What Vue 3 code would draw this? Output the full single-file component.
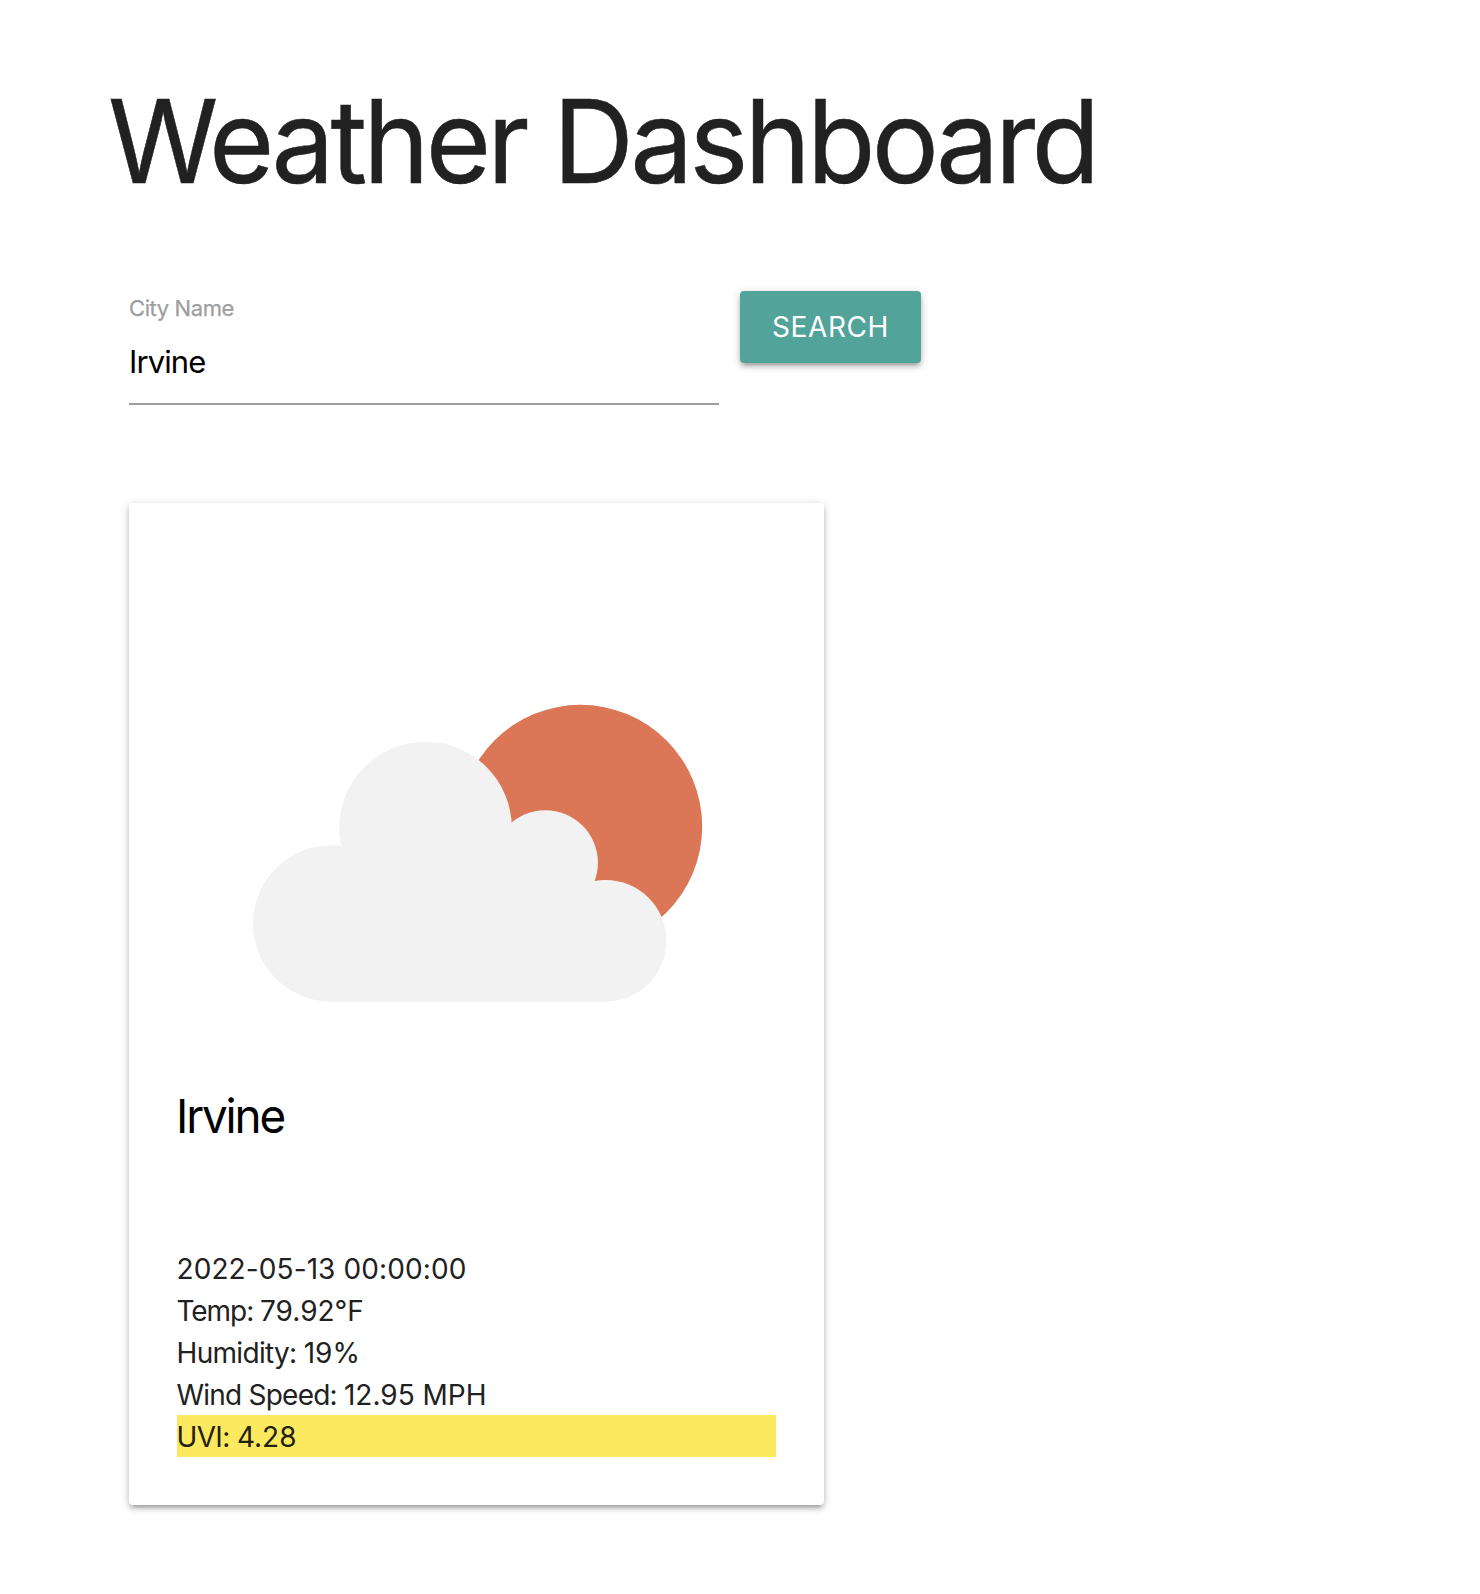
<script setup>
const details = [
  { name: 'temp', label: 'Temp:', value: '79.92°F' },
  { name: 'humidity', label: 'Humidity:', value: '19%' },
  { name: 'wind', label: 'Wind Speed:', value: '12.95 MPH' },
  { name: 'uvi', label: 'UVI:', value: '4.28' }
]
</script>

<template>
  <main class="page">
    <h1><span>Weather Dashboard</span></h1>
    <form class="search" @submit.prevent>
      <div class="field">
        <label for="city"><span>City Name</span></label>
        <input id="city" type="text" value="Irvine" />
      </div>
      <button type="submit"><span>SEARCH</span></button>
    </form>
    <article class="card">
      <svg class="weather" viewBox="0 0 695 560" aria-label="Partly cloudy">
        <circle cx="451.500" cy="323.500" r="121.700" fill="#db7656" />
        <g fill="#f2f2f2">
          <circle cx="202.200" cy="420.500" r="78.200" />
          <circle cx="296.500" cy="325" r="86.300" />
          <circle cx="416.300" cy="359.800" r="52.600" />
          <circle cx="476.500" cy="437.800" r="60.900" />
          <path d="M202 498.700V420L211.500 343.700L296 325L383 321.500L416 359L465.500 378L476.500 437V498.700Z" />
        </g>
      </svg>
      <h2><span>Irvine</span></h2>
      <div class="details">
        <p class="date">2022-05-13 00:00:00</p>
        <p v-for="line in details" :key="line.name" :class="line.name"><span class="label">{{ line.label + ' ' }}</span><span>{{ line.value }}</span></p>
      </div>
    </article>
  </main>
</template>

<style>
body { margin: 0; background: #fff; }
</style>

<style scoped>
* { box-sizing: border-box; }
.page { min-height: 1594px; padding: 76px 0 0 108px; font-family: Inter, sans-serif; color: #212121; }
h1 { margin: 0; height: 132px; font-size: 115px; line-height: 132px; font-weight: 400; letter-spacing: -4px; white-space: nowrap; -webkit-text-stroke: .5px #212121; }
h1 span, h2 span { display: inline-block; transform: scaleX(.975); transform-origin: left center; }
.search { display: flex; margin: 83px 0 0 21px; gap: 21px; height: 114px; align-items: flex-start; }
.field { width: 590px; display: flex; flex-direction: column; }
label { height: 35px; line-height: 35px; color: #9e9e9e; font-size: 22px; letter-spacing: -.4px; -webkit-text-stroke: .25px #9e9e9e; }
input { height: 79px; border: 0; border-bottom: 2px solid #9e9e9e; padding: 0 0 6px; font: 31px Inter, sans-serif; letter-spacing: -.9px; outline: 0; color: #000; }
button { width: 181px; height: 72px; padding: 0; border: 0; border-radius: 4px; background: #52a399; color: #fff; font: 28px Inter, sans-serif; letter-spacing: .6px; box-shadow: 0 4px 4px rgba(0,0,0,.14), 0 6px 2px -4px rgba(0,0,0,.12), 0 2px 10px rgba(0,0,0,.2); }
.card { width: 695px; height: 1002px; margin: 98px 0 0 21px; border-radius: 4px; background: #fff; box-shadow: 0 4px 4px rgba(0,0,0,.14), 0 6px 2px -4px rgba(0,0,0,.12), 0 2px 10px rgba(0,0,0,.2); }
.weather { display: block; width: 695px; height: 560px; }
h2 { margin: 21px 47px 0; font-size: 47px; line-height: 64px; font-weight: 400; letter-spacing: -2.2px; color: #000; }
.details { margin: 99px 48px 0; font-size: 28px; }
p { margin: 0; height: 42px; line-height: 44px; white-space: pre; text-indent: -.5px; }
.date { letter-spacing: .1px; }
.temp .label { letter-spacing: -1.05px; }
.humidity .label { letter-spacing: -.68px; }
.wind .label { letter-spacing: -.78px; }
.uvi { background: #fde960; color: #21210f; }
.uvi .label { letter-spacing: -.65px; }
</style>
